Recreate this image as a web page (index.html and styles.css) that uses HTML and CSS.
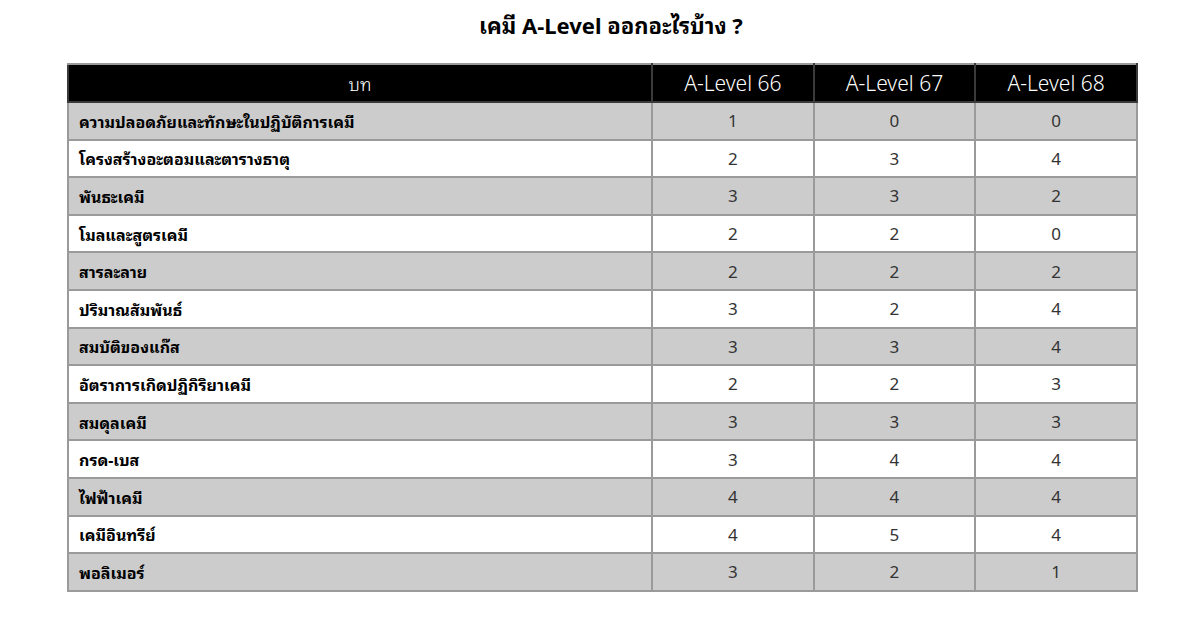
FILE: index.html
```html
<!DOCTYPE html>
<html lang="th">
<head>
<meta charset="utf-8">
<title>เคมี A-Level ออกอะไรบ้าง ?</title>
<link rel="stylesheet" href="styles.css">
</head>
<body>
<div class="page">
  <h1 class="title">เคมี A-Level ออกอะไรบ้าง ?</h1>
  <table class="grid">
    <thead>
      <tr>
        <th class="c-topic">บท</th>
        <th class="c-num">A-Level 66</th>
        <th class="c-num">A-Level 67</th>
        <th class="c-num">A-Level 68</th>
      </tr>
    </thead>
    <tbody>
      <tr class="odd"><td class="topic">ความปลอดภัยและทักษะในปฏิบัติการเคมี</td><td>1</td><td>0</td><td>0</td></tr>
      <tr><td class="topic">โครงสร้างอะตอมและตารางธาตุ</td><td>2</td><td>3</td><td>4</td></tr>
      <tr class="odd"><td class="topic">พันธะเคมี</td><td>3</td><td>3</td><td>2</td></tr>
      <tr><td class="topic">โมลและสูตรเคมี</td><td>2</td><td>2</td><td>0</td></tr>
      <tr class="odd"><td class="topic">สารละลาย</td><td>2</td><td>2</td><td>2</td></tr>
      <tr><td class="topic">ปริมาณสัมพันธ์</td><td>3</td><td>2</td><td>4</td></tr>
      <tr class="odd"><td class="topic">สมบัติของแก๊ส</td><td>3</td><td>3</td><td>4</td></tr>
      <tr><td class="topic">อัตราการเกิดปฏิกิริยาเคมี</td><td>2</td><td>2</td><td>3</td></tr>
      <tr class="odd"><td class="topic">สมดุลเคมี</td><td>3</td><td>3</td><td>3</td></tr>
      <tr><td class="topic">กรด-เบส</td><td>3</td><td>4</td><td>4</td></tr>
      <tr class="odd"><td class="topic">ไฟฟ้าเคมี</td><td>4</td><td>4</td><td>4</td></tr>
      <tr><td class="topic">เคมีอินทรีย์</td><td>4</td><td>5</td><td>4</td></tr>
      <tr class="odd"><td class="topic">พอลิเมอร์</td><td>3</td><td>2</td><td>1</td></tr>
    </tbody>
  </table>
</div>
</body>
</html>
```

FILE: styles.css
```css
html, body {
  margin: 0;
  padding: 0;
  background: #ffffff;
}

body {
  font-family: "Noto Sans Thai Looped", "Noto Sans Thai", "Noto Sans", "DejaVu Sans", sans-serif;
  color: #000;
}

.page {
  width: 1200px;
  height: 627px;
  overflow: hidden;
}

.title {
  margin: 0;
  height: 63px;
  display: flex;
  align-items: center;
  justify-content: center;
  padding: 0 0 16px 22px;
  box-sizing: border-box;
  font-size: 22px;
  font-weight: 700;
  line-height: 1;
}

.grid {
  margin-left: 67px;
  width: 1071px;
  border-collapse: collapse;
  table-layout: fixed;
}

.grid th,
.grid td {
  border: 2px solid #9a9a9a;
  padding: 0;
  height: 37.6px;
  box-sizing: border-box;
}

.grid th {
  background: #000;
  color: #fff;
  font-family: "Noto Sans", "Noto Sans Thai", sans-serif;
  font-weight: 300;
  font-size: 21px;
  text-align: center;
  height: 38px;
  border-color: #3a3a3a;
  border-top-color: #9a9a9a;
}

.grid th.c-topic {
  width: 584px;
  font-size: 18px;
  font-family: "Noto Sans Thai Looped", "Noto Sans Thai", sans-serif;
}

.grid td {
  text-align: center;
  font-size: 17px;
  color: #333;
  font-family: "Noto Sans", "DejaVu Sans", sans-serif;
  font-weight: 400;
}

.grid td.topic {
  text-align: left;
  padding-left: 10px;
  font-family: "Noto Sans Thai Looped", "Noto Sans Thai", "Noto Sans", sans-serif;
  font-weight: 700;
  font-size: 16px;
  color: #000;
}

.grid tr.odd td {
  background: #cccccc;
}
```
